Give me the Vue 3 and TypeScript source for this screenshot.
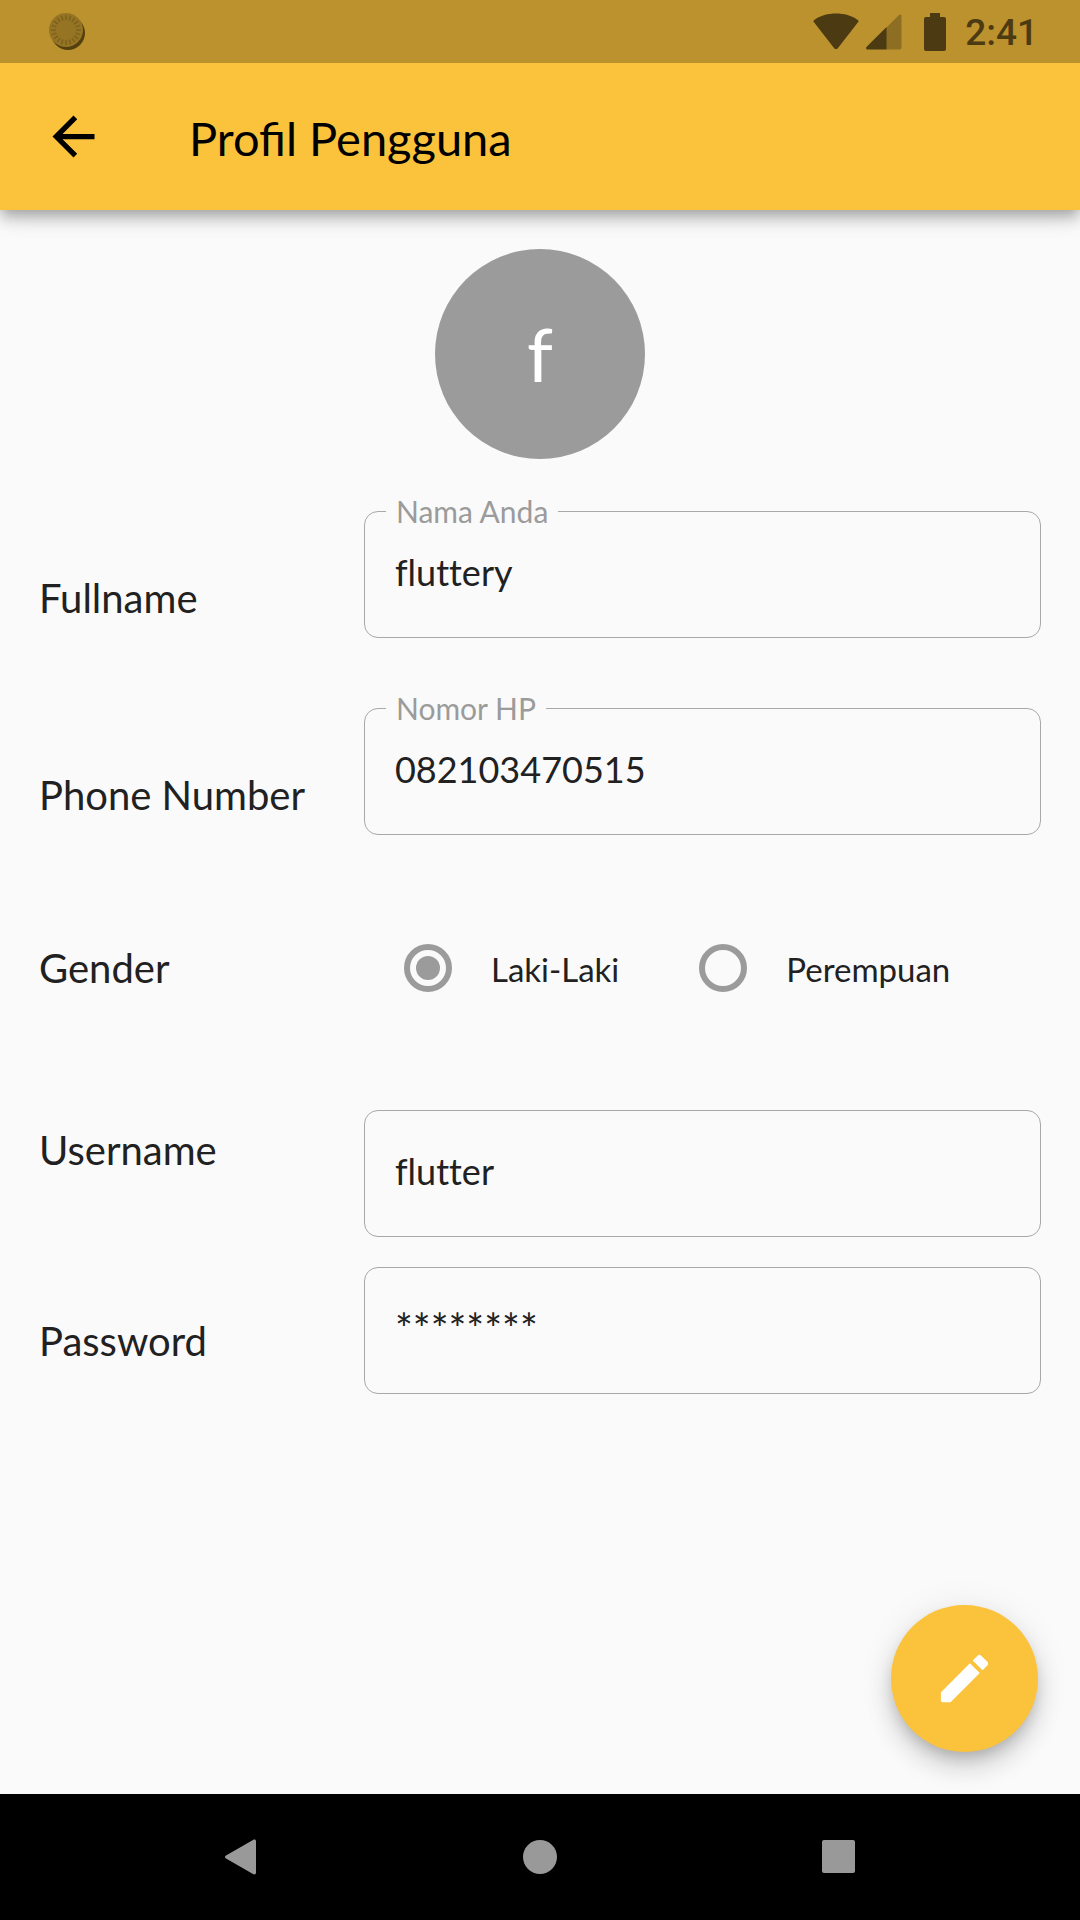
<script setup lang="ts">
import { ref } from 'vue'

type Gender = 'male' | 'female'

const fullname = ref('fluttery')
const phone = ref('082103470515')
const gender = ref<Gender>('male')
const username = ref('flutter')
const password = ref('********')

const genders: { value: Gender; text: string }[] = [
  { value: 'male', text: 'Laki-Laki' },
  { value: 'female', text: 'Perempuan' },
]

// Angles of the short strokes around the sync indicator
const ticks: number[] = Array.from({ length: 20 }, (_, i) => i * 18)
</script>

<template>
  <div class="screen">
    <div class="status">
      <svg class="sync" viewBox="0 0 40 40" aria-hidden="true">
        <circle cx="20" cy="21" r="17" fill="#54400f" />
        <circle cx="18" cy="18" r="17" fill="#957424" />
        <path
          v-for="a in ticks"
          :key="a"
          d="M18 3v5"
          stroke="#7d601c"
          stroke-width="1.5"
          :transform="`rotate(${a} 18 18)`"
        />
      </svg>
      <div class="status-right">
        <svg class="wifi" viewBox="0 0 46 38" aria-hidden="true">
          <path d="M1.2 9.6C.2 8.800.2 7.600 1.300 6.900 7.500 2.500 15 .5 23 .5s15.500 2 21.700 6.400c1.100.7 1.100 1.900.1 2.700L24.800 35.200c-1 1.200-2.600 1.200-3.600 0z" fill="#4b3a12" />
        </svg>
        <svg class="signal" viewBox="0 0 36 36" aria-hidden="true">
          <path d="M20 14 33 1c1-1 2.500-.5 2.500 1v31.500c0 1.200-.8 2-2 2H20z" fill="#8d6e22" />
          <path d="M20.500 13v22.500H2c-2 0-2.500-1.500-1.300-2.700z" fill="#4b3a12" />
        </svg>
        <svg class="battery" viewBox="0 0 22 38" aria-hidden="true">
          <path d="M6 0h10v4h4a2 2 0 0 1 2 2v30a2 2 0 0 1-2 2H2a2 2 0 0 1-2-2V6a2 2 0 0 1 2-2h4z" fill="#4b3a12" />
        </svg>
        <time class="clock">2:41</time>
      </div>
    </div>

    <header class="appbar">
      <button class="icon-button" type="button" aria-label="Kembali">
        <svg viewBox="0 0 24 24" aria-hidden="true">
          <path d="M20 11H7.830l5.590-5.590L12 4l-8 8 8 8 1.410-1.410L7.830 13H20v-2z" fill="#000" />
        </svg>
      </button>
      <h1>Profil Pengguna</h1>
    </header>

    <main>
      <div class="avatar">f</div>

      <form @submit.prevent>
        <div class="row row-titled">
          <label class="name" for="fullname">Fullname</label>
          <div class="field">
            <label class="caption" for="fullname">Nama Anda</label>
            <input id="fullname" v-model="fullname" type="text" />
          </div>
        </div>

        <div class="row row-titled">
          <label class="name" for="phone">Phone Number</label>
          <div class="field">
            <label class="caption" for="phone">Nomor HP</label>
            <input id="phone" v-model="phone" type="tel" />
          </div>
        </div>

        <div class="row row-gender" role="radiogroup" aria-labelledby="gender-name">
          <span id="gender-name" class="name">Gender</span>
          <div class="options">
            <label v-for="g in genders" :key="g.value" class="option">
              <input v-model="gender" type="radio" name="gender" :value="g.value" />
              <span>{{ g.text }}</span>
            </label>
          </div>
        </div>

        <div class="row row-username">
          <label class="name" for="username">Username</label>
          <div class="field">
            <input id="username" v-model="username" type="text" />
          </div>
        </div>

        <div class="row row-password">
          <label class="name" for="password">Password</label>
          <div class="field">
            <input id="password" v-model="password" type="text" autocomplete="off" />
          </div>
        </div>
      </form>

      <button class="fab" type="button" aria-label="Edit">
        <svg viewBox="0 0 24 24" aria-hidden="true">
          <path d="M3 17.460v3.040c0 .28.220.5.500.5h3.040c.13 0 .26-.050.350-.150L17.810 9.940l-3.750-3.750L3.150 17.100c-.1.100-.15.220-.15.360zM20.710 7.040c.39-.39.39-1.020 0-1.410l-2.340-2.340c-.39-.39-1.020-.39-1.410 0l-1.830 1.830 3.750 3.750 1.830-1.830z" fill="#fff" />
        </svg>
      </button>
    </main>

    <nav class="navbar">
      <button type="button" aria-label="Back">
        <svg viewBox="0 0 36 36" aria-hidden="true">
          <path d="M3 16.500 30 1c1.500-1 3-.5 3 1.500v31c0 2-1.500 2.500-3 1.500L3 19.500c-1.500-1-1.500-2 0-3z" fill="#999" />
        </svg>
      </button>
      <button type="button" aria-label="Home">
        <svg viewBox="0 0 36 36" aria-hidden="true">
          <circle cx="18" cy="18" r="17" fill="#999" />
        </svg>
      </button>
      <button type="button" aria-label="Overview">
        <svg viewBox="0 0 36 36" aria-hidden="true">
          <rect x="1" y="1" width="33" height="33" rx="2" fill="#999" />
        </svg>
      </button>
    </nav>
  </div>
</template>

<style>
body {
  background: #fafafa;
}
</style>

<style scoped>
.screen {
  display: flex;
  flex-direction: column;
  min-height: 100vh;
  background: #fafafa;
  color: #212121;
  font-family: 'Gill Sans', Lato, sans-serif;
}

.screen *,
.screen {
  box-sizing: border-box;
}

button {
  padding: 0;
  border: 0;
  background: none;
}

svg {
  display: block;
}

.status {
  display: flex;
  justify-content: space-between;
  align-items: center;
  height: 63px;
  padding: 0 42px 0 48px;
  background: #bb922d;
  z-index: 2;
}

.sync {
  width: 40px;
  height: 40px;
}

.status-right {
  display: flex;
  align-items: center;
}

.wifi {
  width: 46px;
  height: 38px;
  margin-right: 7px;
}

.signal {
  width: 36px;
  height: 36px;
  margin-right: 22px;
}

.battery {
  width: 22px;
  height: 38px;
  margin-right: 19px;
}

.clock {
  padding-top: 2px;
  color: #4b3a12;
  font: 500 37px/48px Roboto, sans-serif;
}

.appbar {
  display: flex;
  align-items: center;
  height: 147px;
  padding: 0 42px;
  gap: 84px;
  background: #fbc23c;
  box-shadow:
    0 5px 11px -3px rgba(0, 0, 0, 0.2),
    0 11px 13px 0 rgba(0, 0, 0, 0.14),
    0 3px 26px 0 rgba(0, 0, 0, 0.12);
  z-index: 1;
}

.icon-button svg,
.fab svg {
  width: 63px;
  height: 63px;
}

h1 {
  margin: 0;
  padding-top: 2px;
  color: #000;
  font-size: 47px;
  line-height: 60px;
  font-weight: 400;
}

main {
  position: relative;
  flex: 1;
  padding: 39px 39px 200px;
}

.avatar {
  display: flex;
  align-items: center;
  justify-content: center;
  width: 210px;
  height: 210px;
  margin: 0 auto 52px;
  border-radius: 50%;
  background: #9b9b9b;
  color: #fff;
  font-size: 74px;
  line-height: 84px;
}

.row {
  display: grid;
  grid-template-columns: minmax(0, 12fr) minmax(0, 25fr);
  align-items: start;
}

.name {
  font-size: 40px;
  line-height: 48px;
  white-space: nowrap;
}

.row-titled {
  margin-bottom: 70px;
}

.row-titled .name {
  padding-top: 63px;
}

.row-gender {
  align-items: center;
  height: 126px;
  margin-bottom: 79px;
}

.row-username {
  margin-bottom: 30px;
}

.row-username .name {
  padding-top: 16px;
}

.row-password .name {
  padding-top: 50px;
}

.field {
  position: relative;
}

.field input {
  display: block;
  width: 100%;
  height: 127px;
  padding: 37px 30px 42px;
  border: 1px solid #a8a8a8;
  border-radius: 14px;
  background: none;
  color: inherit;
  font-family: inherit;
  font-size: 36px;
  line-height: 48px;
  font-variant-ligatures: none;
  outline: none;
}

.row-password input {
  font-size: 42px;
}

.caption {
  position: absolute;
  top: -18px;
  left: 22px;
  padding: 0 10px;
  background: #fafafa;
  color: #9b9b9b;
  font-size: 30px;
  line-height: 36px;
}

.options {
  display: flex;
  gap: 80px;
  padding-left: 40px;
}

.option {
  display: flex;
  align-items: center;
  gap: 39px;
  font-size: 33px;
  line-height: 48px;
}

.option span {
  padding-top: 2px;
}

.option input {
  appearance: none;
  display: grid;
  place-content: center;
  width: 48px;
  height: 48px;
  margin: 0;
  border: 6px solid #9b9b9b;
  border-radius: 50%;
}

.option input:checked::before {
  content: '';
  width: 24px;
  height: 24px;
  border-radius: 50%;
  background: #9b9b9b;
}

.fab {
  position: absolute;
  right: 42px;
  bottom: 42px;
  display: flex;
  align-items: center;
  justify-content: center;
  width: 147px;
  height: 147px;
  border-radius: 50%;
  background: #fbc23c;
  box-shadow:
    0 8px 13px -3px rgba(0, 0, 0, 0.16),
    0 16px 26px 0 rgba(0, 0, 0, 0.14),
    0 3px 36px 0 rgba(0, 0, 0, 0.08);
}

.navbar {
  display: flex;
  align-items: center;
  justify-content: center;
  gap: 263px;
  height: 126px;
  background: #000;
  z-index: 1;
}

.navbar svg {
  width: 36px;
  height: 36px;
}
</style>
